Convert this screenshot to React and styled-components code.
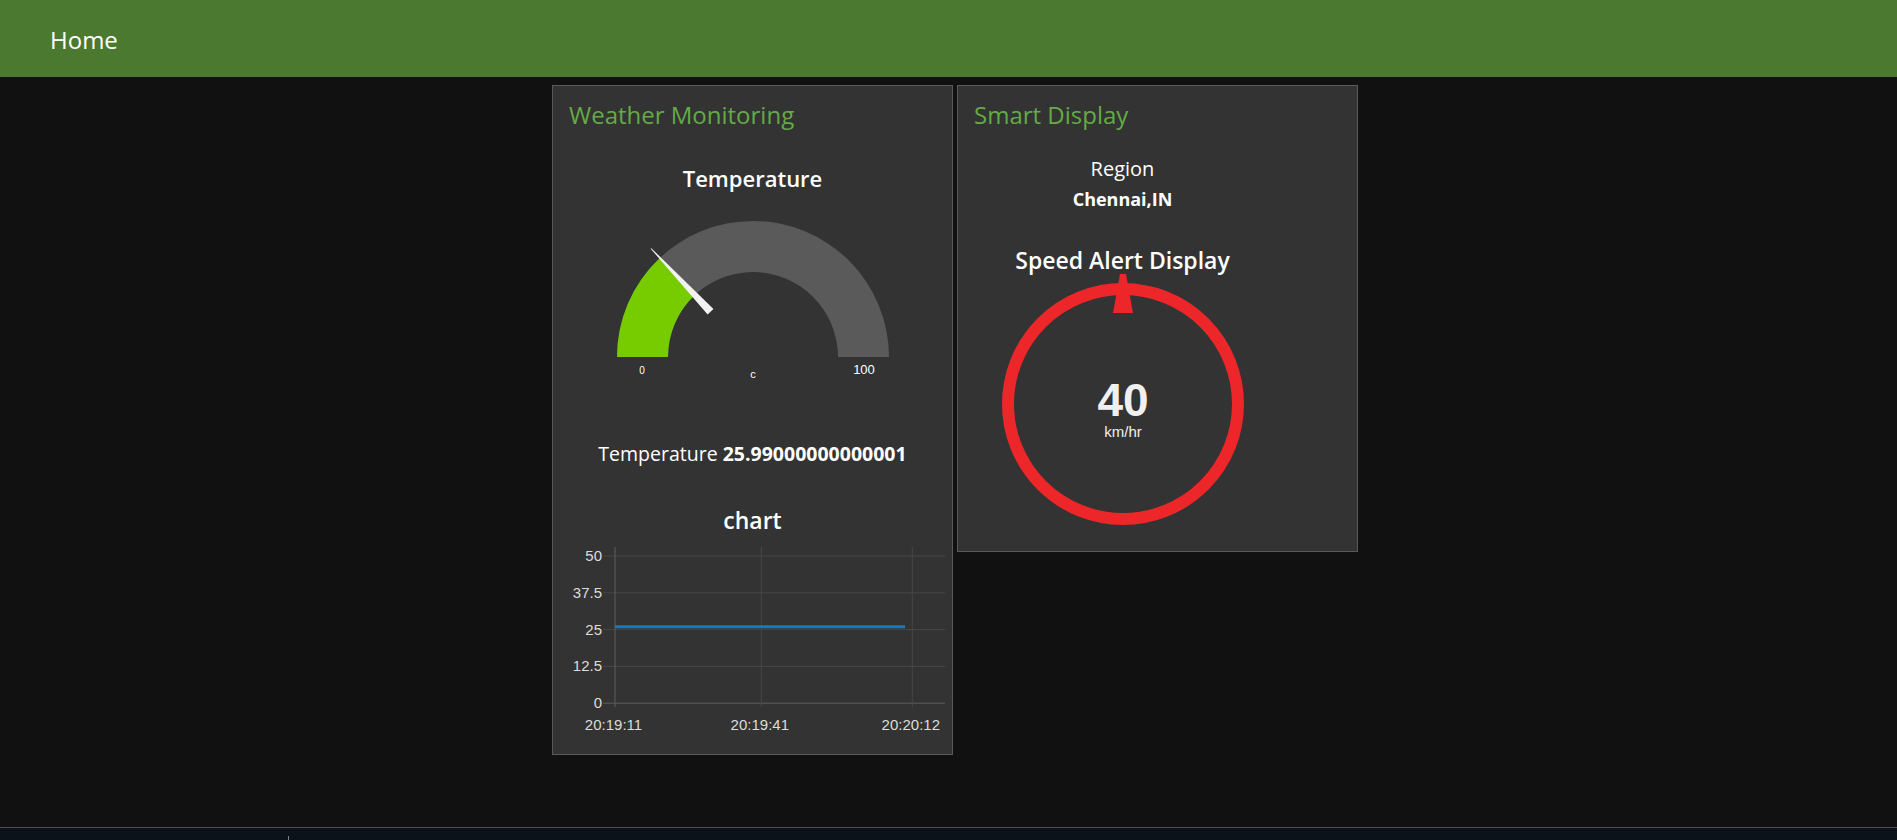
import React from 'react';
import styled, { createGlobalStyle } from 'styled-components';

const font = '"Open Sans", "Noto Sans", sans-serif';
const chartFont = '"Liberation Sans", Arial, sans-serif';

const GlobalStyle = createGlobalStyle`
  html, body {
    margin: 0;
    padding: 0;
    background: #111111;
  }
  body {
    font-family: ${font};
    color: #ffffff;
  }
`;

const Page = styled.div`
  height: 100vh;
  display: flex;
  flex-direction: column;
  background: #111111;
`;

const Toolbar = styled.header`
  height: 77px;
  flex-shrink: 0;
  background: #4b7930;
  display: flex;
  align-items: center;
  padding-left: 50px;
`;

const ToolbarTitle = styled.div`
  font-size: 24px;
  line-height: 32px;
  margin-top: 2px;
  color: #ffffff;
`;

const Main = styled.main`
  flex: 1;
  display: flex;
  justify-content: center;
  align-items: flex-start;
  gap: 4px;
  padding: 8px 0 0 13px;
`;

const Group = styled.section`
  width: 401px;
  box-sizing: border-box;
  background: #333333;
  border: 1px solid #595959;
  padding: 13px 0 ${p => p.$bottom}px;
  display: flex;
  flex-direction: column;
`;

const GroupTitle = styled.h2`
  margin: 0;
  padding-left: 16px;
  font-size: 24px;
  line-height: 32px;
  font-weight: 500;
  color: #64aa46;
`;

const Column = styled.div`
  width: ${p => p.$width || '100%'};
  display: flex;
  flex-direction: column;
  align-items: center;
`;

const WidgetTitle = styled.div`
  margin-top: ${p => p.$top}px;
  font-size: ${p => p.$size || 22}px;
  line-height: ${p => p.$lh || 32}px;
  font-weight: 600;
  color: #ffffff;
  text-align: center;
`;

const TextLine = styled.div`
  margin-top: ${p => p.$top}px;
  font-size: ${p => p.$size || 19.5}px;
  line-height: 28px;
  color: #ffffff;
  text-align: center;

  b {
    font-weight: 700;
  }
`;

const Drawing = styled.svg`
  display: block;
  margin-top: ${p => p.$top || 0}px;
  overflow: visible;
`;

const Footer = styled.footer`
  height: 12px;
  flex-shrink: 0;
  background: #0b121a;
  border-top: 1px solid #4d4d4d;
  display: flex;
  align-items: flex-end;
`;

const FooterTick = styled.span`
  width: 1px;
  height: 4px;
  margin-left: 288px;
  background: #7d8288;
`;

const Gauge = ({ value, min, max, units }) => {
  const cx = 150, cy = 147, R = 136, r = 85;
  const t = (value - min) / (max - min);
  const a = t * Math.PI;
  const ox = cx - R * Math.cos(a), oy = cy - R * Math.sin(a);
  const ix = cx - r * Math.cos(a), iy = cy - r * Math.sin(a);
  const ux = -Math.cos(a), uy = -Math.sin(a);
  const px = Math.sin(a), py = -Math.cos(a);
  const tip = [cx + ux * 149, cy + uy * 149];
  const base = [cx + ux * 62, cy + uy * 62];
  const needle = [
    [tip[0] - px * 0.4, tip[1] - py * 0.4],
    [tip[0] + px * 0.4, tip[1] + py * 0.4],
    [base[0] + px * 4, base[1] + py * 4],
    [base[0] - px * 4, base[1] - py * 4],
  ].map(p => p.join(',')).join(' ');

  return (
    <Drawing $top={16} width="300" height="175" viewBox="0 0 300 175">
      <path
        d={`M${cx - R},${cy} A${R},${R} 0 0 1 ${cx + R},${cy} L${cx + r},${cy} A${r},${r} 0 0 0 ${cx - r},${cy} Z`}
        fill="#5a5a5a"
      />
      <path
        d={`M${cx - R},${cy} A${R},${R} 0 0 1 ${ox},${oy} L${ix},${iy} A${r},${r} 0 0 0 ${cx - r},${cy} Z`}
        fill="#77cc00"
      />
      <polygon points={needle} fill="#f2f2f2" />
      <g fill="#ffffff" fontFamily={chartFont} textAnchor="middle">
        <text x="39" y="164" fontSize="10">{min}</text>
        <text x="150" y="168" fontSize="11">{units}</text>
        <text x="261" y="163.5" fontSize="13">{max}</text>
      </g>
    </Drawing>
  );
};

const yTicks = [50, 37.5, 25, 12.5, 0];
const xTicks = [
  { x: 58, label: '20:19:11' },
  { x: 204.3, label: '20:19:41' },
  { x: 355.3, label: '20:20:12' },
];

const LineChart = ({ value }) => {
  const top = 16, step = 36.8;
  const yFor = v => top + (50 - v) / 12.5 * step;
  return (
    <Drawing $top={4} width="392" height="200" viewBox="0 0 392 200">
      {yTicks.map(v => (
        <line key={v} x1="46" x2="388" y1={yFor(v)} y2={yFor(v)}
              stroke={v === 0 ? '#5e5e5e' : '#474747'} strokeWidth="1" />
      ))}
      {xTicks.map((t, i) => (
        <line key={t.label} x1={t.x} x2={t.x} y1="7" y2="167"
              stroke={i === 0 ? '#5e5e5e' : '#474747'} strokeWidth="1" />
      ))}
      <line x1="58" x2="348" y1={yFor(value)} y2={yFor(value)} stroke="#1f77b4" strokeWidth="3" />
      <g fill="#dddddd" fontFamily={chartFont} fontSize="15">
        {yTicks.map(v => (
          <text key={v} x="45" y={yFor(v) + 5} textAnchor="end">{v}</text>
        ))}
        {xTicks.map(t => (
          <text key={t.label} x={t.x - 1.5} y="190" textAnchor="middle">{t.label}</text>
        ))}
      </g>
    </Drawing>
  );
};

const SpeedSign = ({ speed, units }) => (
  <Drawing width="260" height="256" viewBox="0 0 260 256">
    <circle cx="130" cy="130" r="115" fill="none" stroke="#ed2729" strokeWidth="12" />
    <polygon points="127,0 133,0 140,39 120,39" fill="#ed2729" />
    <text x="130" y="142" textAnchor="middle" fontFamily={chartFont}
          fontWeight="700" fontSize="46" fill="#f0f0f0">{speed}</text>
    <text x="130" y="163" textAnchor="middle" fontFamily={chartFont}
          fontSize="15" fill="#f0f0f0">{units}</text>
  </Drawing>
);

export default function App() {
  const temperature = 25.99000000000001;
  return (
    <Page>
      <GlobalStyle />
      <Toolbar>
        <ToolbarTitle>Home</ToolbarTitle>
      </Toolbar>
      <Main>
        <Group $bottom={14}>
          <GroupTitle>Weather Monitoring</GroupTitle>
          <Column>
            <WidgetTitle $top={31}>Temperature</WidgetTitle>
            <Gauge value={temperature} min={0} max={100} units="c" />
            <TextLine $top={55}>Temperature <b>{String(temperature)}</b></TextLine>
            <WidgetTitle $top={36} $size={23}>chart</WidgetTitle>
            <LineChart value={temperature} />
          </Column>
        </Group>
        <Group $bottom={21}>
          <GroupTitle>Smart Display</GroupTitle>
          <Column $width="329px">
            <TextLine $top={24} $size={20}>Region</TextLine>
            <TextLine $top={2} $size={18}><b>Chennai,IN</b></TextLine>
            <WidgetTitle $top={33} $lh={28} $size={23}>Speed Alert Display</WidgetTitle>
            <SpeedSign speed={40} units="km/hr" />
          </Column>
        </Group>
      </Main>
      <Footer>
        <FooterTick />
      </Footer>
    </Page>
  );
}
